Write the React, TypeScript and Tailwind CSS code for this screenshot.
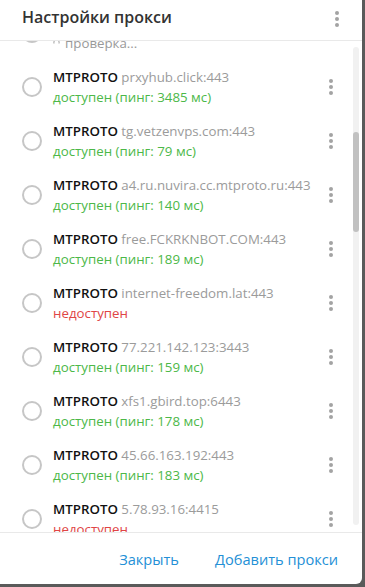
import React from "react";

type Proxy = {
  host: string;
  state: "ok" | "fail" | "check";
  ping?: number;
};

const proxies: Proxy[] = [
  { host: "mtproxy.example.net:443", state: "check" },
  { host: "prxyhub.click:443", state: "ok", ping: 3485 },
  { host: "tg.vetzenvps.com:443", state: "ok", ping: 79 },
  { host: "a4.ru.nuvira.cc.mtproto.ru:443", state: "ok", ping: 140 },
  { host: "free.FCKRKNBOT.COM:443", state: "ok", ping: 189 },
  { host: "internet-freedom.lat:443", state: "fail" },
  { host: "77.221.142.123:3443", state: "ok", ping: 159 },
  { host: "xfs1.gbird.top:6443", state: "ok", ping: 178 },
  { host: "45.66.163.192:443", state: "ok", ping: 183 },
  { host: "5.78.93.16:4415", state: "fail" },
];

function Dots() {
  return (
    <div className="flex w-6 flex-col items-center gap-[2px]">
      <span className="h-1 w-1 rounded-full bg-[#a3a3a3]" />
      <span className="h-1 w-1 rounded-full bg-[#a3a3a3]" />
      <span className="h-1 w-1 rounded-full bg-[#a3a3a3]" />
    </div>
  );
}

function Status({ p }: { p: Proxy }) {
  if (p.state === "check") {
    return (
      <div className="flex items-center gap-[5px] text-[#999999]">
        <svg width="7" height="7" viewBox="0 0 7 7" className="-mt-[3px]">
          <path d="M1.2 5.6 A2.6 2.6 0 1 1 5.8 5.6" fill="none" stroke="#aaaaaa" strokeWidth="1.1" />
        </svg>
        <span>проверка...</span>
      </div>
    );
  }
  if (p.state === "fail") {
    return <div className="text-[#e04545]">недоступен</div>;
  }
  return <div className="text-[#4cb848]">доступен (пинг: {p.ping} мс)</div>;
}

function ProxyRow({ p }: { p: Proxy }) {
  return (
    <div className="flex h-[54px] items-center">
      <span className="ml-[22px] h-5 w-5 shrink-0 rounded-full border-2 border-[#c6c6c6]" />
      <div className="ml-[11px] flex-1 text-[13.3px] leading-[20px]">
        <div className="whitespace-nowrap">
          <span className="font-semibold text-[#111111]">MTPROTO</span>{" "}
          <span className="font-medium text-[#9b9b9b]">{p.host}</span>
        </div>
        <Status p={p} />
      </div>
      <div className="mr-[19px]">
        <Dots />
      </div>
    </div>
  );
}

export default function App() {
  return (
    <div className="h-[587px] w-[365px] bg-[#5a5a5a] font-['Open_Sans',sans-serif]">
      <div className="flex h-[584px] w-[362px] flex-col overflow-hidden rounded-br-[6px] bg-white">
        <div className="flex h-[41px] shrink-0 items-center justify-between border-b border-[#e9e9e9] pl-[22px]">
          <h1 className="pb-[6px] text-[16px] font-semibold leading-[22px] text-[#333333]">Настройки прокси</h1>
          <div className="mr-[13px] pb-[3px]">
            <Dots />
          </div>
        </div>

        <div className="relative flex-1 overflow-hidden">
          <div className="-mt-[35px]">
            {proxies.map((p) => (
              <ProxyRow key={p.host} p={p} />
            ))}
          </div>
          <div className="absolute bottom-[7px] right-[3px] top-[6px] w-[6px] rounded-full bg-[#f1f1f1]">
            <div className="mt-[85px] h-[100px] w-full rounded-full bg-[#c1c1c1]" />
          </div>
        </div>

        <div className="flex h-[52px] shrink-0 items-center justify-end gap-[36px] border-t border-[#e9e9e9] pr-[24px] text-[14.6px] text-[#2490d6]">
          <button className="mt-[2px]">Закрыть</button>
          <button className="mt-[2px]">Добавить прокси</button>
        </div>
      </div>
    </div>
  );
}
